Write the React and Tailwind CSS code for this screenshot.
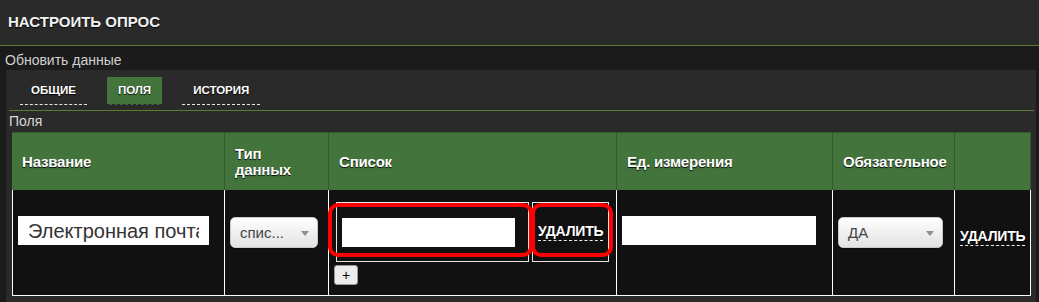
import React from 'react';

const shadow = '[text-shadow:0_1px_1px_rgba(0,0,0,0.9)]';

function Tab({ label, active }) {
  return (
    <div
      className={`h-[28px] px-[11px] flex items-center text-[11.5px] font-bold text-white ${shadow} border-b border-dashed ${
        active ? 'bg-[#43743c] border-[#2a2a2a]' : 'border-[#e8e8e8]'
      }`}
    >
      {label}
    </div>
  );
}

function FakeSelect({ value, width }) {
  return (
    <div
      className="h-[31px] rounded-[5px] border border-[#c8c8c8] bg-gradient-to-b from-white to-[#e2e2e2] shadow-[0_1px_1px_rgba(0,0,0,0.4)] flex items-center justify-between pl-[9px] pr-[8px]"
      style={{ width }}
    >
      <span className="text-[15px] text-[#444] leading-none">{value}</span>
      <svg width="8" height="5" viewBox="0 0 8 5" className="mt-[1px]">
        <path d="M0 0 L8 0 L4 5 Z" fill="#8f8f8f" />
      </svg>
    </div>
  );
}

function DeleteLink() {
  return (
    <span className={`inline-block text-[14px] leading-[16px] font-bold text-white ${shadow} border-b border-dashed border-[#eee] pb-[1px] tracking-[-0.2px]`}>
      УДАЛИТЬ
    </span>
  );
}

const HEAD = ['Название', 'Тип данных', 'Список', 'Ед. измерения', 'Обязательное', ''];

export default function App() {
  return (
    <div className="w-[1039px] h-[302px] overflow-hidden bg-[#1b1b1b] font-['Liberation_Sans',Arial,sans-serif]">
      {/* top bar */}
      <div className="h-[46px] bg-[#2a2a2a] border-b border-[#5d7b31] flex items-center px-[8px]">
        <h1 className={`text-[15px] font-bold text-[#f2f2f2] ${shadow}`}>НАСТРОИТЬ ОПРОС</h1>
      </div>

      <div className="h-[24px] pt-[4px] px-[5px] text-[14px] leading-[20px] text-[#d0d0d0]">Обновить данные</div>

      {/* panel */}
      <div className="ml-[5px] w-[1031px] h-[240px] bg-[#2a2a2a] border-l border-[#151515]">
        <div className="flex gap-[20px] pl-[14px] pt-[7px]">
          <Tab label="ОБЩИЕ" />
          <Tab label="ПОЛЯ" active />
          <Tab label="ИСТОРИЯ" />
        </div>
        <div className="mt-[5px] ml-[3px] mr-[2px] border-t border-[#5d7b31]" />
        <div className="pl-[3px] text-[14px] leading-[20px] text-[#d8d8d8]">Поля</div>

        <div className="ml-[6px] mt-[1px] w-[1019px] grid grid-cols-[212px_104px_288px_216px_122px_77px]">
          {HEAD.map((h, i) => (
            <div
              key={i}
              className={`h-[58px] bg-[#43743c] border-t border-[#2f5a2a] flex items-center px-[10px] text-[15px] leading-[16px] font-bold tracking-[-0.2px] text-white ${shadow} ${
                i === 0 ? '' : 'border-l'
              } ${i === 5 ? 'border-r' : ''} border-[#2f5a2a]`}
            >
              {h}
            </div>
          ))}

          {/* body row */}
          <div className="h-[106px] bg-[#111] border-l border-b border-white pl-[5px] pt-[26px]">
            <input
              readOnly
              value="Электронная почта"
              className="w-[191px] h-[29px] bg-white px-[10px] text-[20px] text-[#333] outline-none font-['Liberation_Sans',Arial,sans-serif]"
            />
          </div>
          <div className="h-[106px] bg-[#111] border-l border-b border-white pl-[5px] pt-[27px]">
            <FakeSelect value="спис..." width={88} />
          </div>
          <div className="h-[106px] bg-[#111] border-l border-b border-white pl-[7px] pt-[12px] relative">
            <div className="flex gap-[3px]">
              <div className="w-[193px] h-[60px] border border-[#e6e6e6] flex items-center pl-[5px]">
                <input readOnly value="" className="w-[173px] h-[29px] bg-white outline-none" />
              </div>
              <div className="w-[77px] h-[60px] border border-[#e6e6e6] flex items-center pl-[5px]">
                <DeleteLink />
              </div>
            </div>
            <button className="mt-[3px] -ml-[2px] w-[24px] h-[20px] rounded-[3px] border border-[#9a9a9a] bg-[#ececec] text-[14px] leading-none text-black flex items-center justify-center">
              +
            </button>
            {/* red annotation */}
            <div className="absolute -left-[1px] top-[13px] w-[205px] h-[54px] border-[4px] border-[#ff0000] rounded-[10px] pointer-events-none" />
            <div className="absolute left-[202px] top-[13px] w-[82px] h-[54px] border-[4px] border-[#ff0000] rounded-[10px] pointer-events-none" />
          </div>
          <div className="h-[106px] bg-[#111] border-l border-b border-white pl-[5px] pt-[26px]">
            <input readOnly value="" className="w-[194px] h-[29px] bg-white outline-none" />
          </div>
          <div className="h-[106px] bg-[#111] border-l border-b border-white pl-[5px] pt-[27px]">
            <FakeSelect value="ДА" width={105} />
          </div>
          <div className="h-[106px] bg-[#111] border-l border-r border-b border-white pl-[5px] pt-[34px]">
            <DeleteLink />
          </div>
        </div>
      </div>
    </div>
  );
}
